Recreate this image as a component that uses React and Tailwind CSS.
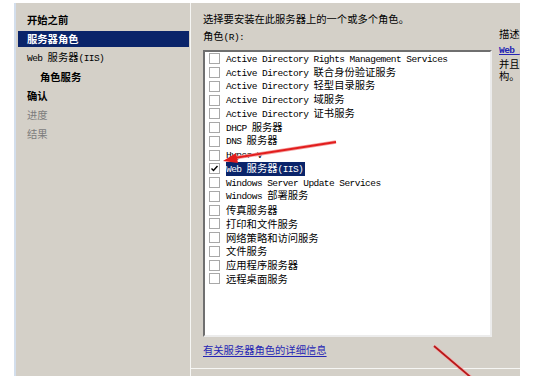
import React from 'react';

const roles = [
    'Active Directory Rights Management Services',
    'Active Directory 联合身份验证服务',
    'Active Directory 轻型目录服务',
    'Active Directory 域服务',
    'Active Directory 证书服务',
    'DHCP 服务器',
    'DNS 服务器',
    'Hyper-V',
    'Web 服务器(IIS)',
    'Windows Server Update Services',
    'Windows 部署服务',
    '传真服务器',
    '打印和文件服务',
    '网络策略和访问服务',
    '文件服务',
    '应用程序服务器',
    '远程桌面服务',
];

const steps = [
    { label: '开始之前', bold: true },
    { label: '服务器角色', selected: true },
    { label: 'Web 服务器(IIS)' },
    { label: '角色服务', bold: true, indent: true },
    { label: '确认', bold: true },
    { label: '进度', muted: true },
    { label: '结果', muted: true },
];

// SimSun-like look: half-width latin runs in a narrow mono, CJK in Noto
function Mixed({ text }) {
    return (
        <span className="whitespace-pre">
            {text
                .split(/([\x20-\x7E]+)/)
                .filter(Boolean)
                .map((part, i) =>
                    /^[\x20-\x7E]+$/.test(part) ? (
                        <span
                            key={i}
                            className="font-['Liberation_Mono',monospace] text-[9.5px] tracking-[-0.55px]"
                        >
                            {part}
                        </span>
                    ) : (
                        <span key={i}>{part}</span>
                    )
                )}
        </span>
    );
}

function Checkbox({ checked }) {
    return (
        <div className="w-[11px] h-[11px] shrink-0 border border-[#a8a8a8] bg-white flex items-center justify-center">
            {checked && (
                <svg width="9" height="9" viewBox="0 0 9 9">
                    <path d="M1.5 4.5 L3.5 6.5 L7.5 2" stroke="#000" strokeWidth="1.4" fill="none" />
                </svg>
            )}
        </div>
    );
}

export default function App() {
    return (
        <div className="relative w-[560px] h-[376px] bg-white overflow-hidden pt-[3px] font-['Noto_Sans_CJK_SC',sans-serif] text-[10.3px] text-black leading-[13px]">
            <div className="flex h-full">
                <div className="w-[14px] shrink-0" />

                {/* wizard steps */}
                <div className="w-[176px] shrink-0 bg-[#d4d0c8] border-l-2 border-[#d3deec] pt-[7px] pl-[2px] pr-[1px]">
                    {steps.map((s) => (
                        <div key={s.label} className="h-[19px] flex items-center">
                            <div
                                className={
                                    'w-full h-[16px] flex items-center ' +
                                    (s.indent ? 'pl-[22px] ' : 'pl-[9px] ') +
                                    (s.selected ? 'bg-[#0a246a] text-white ' : '') +
                                    (s.muted ? 'text-[#7c7c7c] ' : '') +
                                    (s.bold || s.selected ? 'font-semibold' : '')
                                }
                            >
                                <Mixed text={s.label} />
                            </div>
                        </div>
                    ))}
                </div>

                {/* main page */}
                <div className="w-[330px] shrink-0 bg-[#d4d0c8] border-l border-[#f6f6f4] flex flex-col overflow-hidden">
                    <div className="flex flex-1">
                        <div className="w-[302px] shrink-0 pl-[12px] pt-[9px]">
                            <div className="whitespace-nowrap">选择要安装在此服务器上的一个或多个角色。</div>
                            <div className="mt-[4px]">
                                <Mixed text="角色(R):" />
                            </div>
                            <div className="mt-[6px] w-[289px] h-[287px] bg-white border-2 border-t-[#6f6f6f] border-l-[#6f6f6f] border-b-[#ececec] border-r-[#ececec] pl-[4px]">
                                {roles.map((r) => {
                                    const on = r.startsWith('Web');
                                    return (
                                        <div key={r} className="h-[13.75px] flex items-center gap-[6px] whitespace-nowrap">
                                            <Checkbox checked={on} />
                                            <div
                                                className={
                                                    'leading-[12px] ' +
                                                    (on ? 'bg-[#0a246a] text-white pr-[2px]' : '')
                                                }
                                            >
                                                <Mixed text={r} />
                                            </div>
                                        </div>
                                    );
                                })}
                            </div>
                            <div className="mt-[6px]">
                                <span className="text-[#2626b4] underline underline-offset-2">有关服务器角色的详细信息</span>
                            </div>
                        </div>

                        {/* description */}
                        <div className="flex-1 pt-[24px] pl-[6px] whitespace-nowrap overflow-hidden">
                            <div>描述</div>
                            <div className="mt-[3px] leading-[12.5px]">
                                <div>
                                    <span className="text-[#2626b4] underline font-bold">
                                        <Mixed text="Web 服务器(IIS)" />
                                    </span>
                                    提供可靠、可管理
                                </div>
                                <div>并且可扩展的 Web 应用程序基础结</div>
                                <div>构。</div>
                            </div>
                        </div>
                    </div>
                    <div className="h-[8px] border-t border-[#f6f6f4]" />
                </div>

                <div className="flex-1" />
            </div>

            {/* red annotation arrows */}
            <svg className="absolute inset-0 pointer-events-none" width="560" height="376">
                <line x1="336" y1="142" x2="234" y2="158" stroke="#f4a0a0" strokeWidth="3.5" />
                <line x1="336" y1="142" x2="234" y2="158" stroke="#e21d1d" strokeWidth="2" />
                <polygon points="223,161 236,153 238,163" fill="#e21d1d" />
                <line x1="434" y1="346" x2="474" y2="380" stroke="#f2b0b0" strokeWidth="3.5" />
                <line x1="434" y1="346" x2="474" y2="380" stroke="#b81818" strokeWidth="1.8" />
            </svg>
        </div>
    );
}
